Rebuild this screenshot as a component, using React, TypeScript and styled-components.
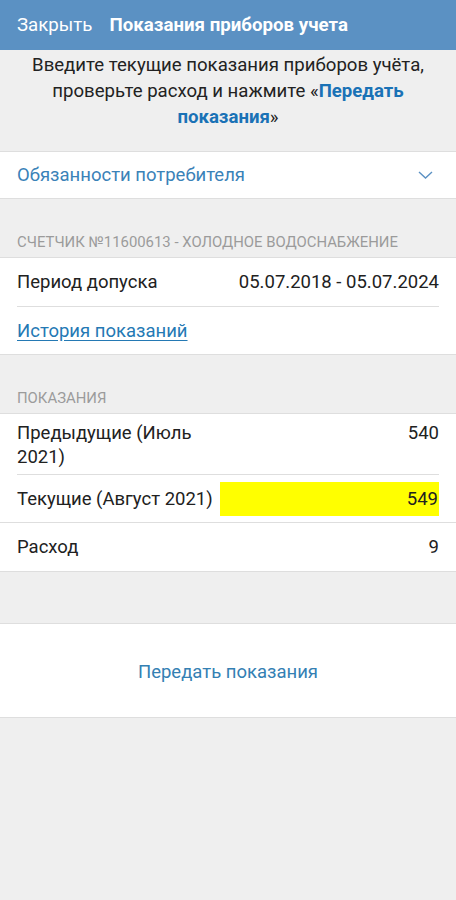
import React from 'react';
import styled, { createGlobalStyle } from 'styled-components';

const GlobalStyle = createGlobalStyle`
  html, body {
    margin: 0;
    padding: 0;
    background: #efefef;
  }
  body {
    font-family: Roboto, "Noto Sans", Arial, sans-serif;
    color: #212121;
  }
`;

const Page = styled.div`
  width: 456px;
  min-height: 900px;
  background: #efefef;
`;

const Header = styled.div`
  height: 50px;
  background: #5b91c3;
  display: flex;
  align-items: center;
  padding: 0 17px;
  gap: 17px;
  color: #fff;
  font-size: 18.7px;
`;

const CloseButton = styled.span`
  font-weight: 400;
`;

const Title = styled.span`
  font-weight: 700;
`;

const Intro = styled.div`
  padding: 2px 16px 21px;
  text-align: center;
  font-size: 18.6px;
  line-height: 26px;
  color: #222;
  border-bottom: 1px solid #dedede;
`;

const IntroLink = styled.b`
  color: #1a72b6;
  line-height: 26px;
`;

const Collapse = styled.div`
  height: 46px;
  background: #fff;
  display: flex;
  align-items: center;
  justify-content: space-between;
  padding: 0 23px 0 17px;
  border-bottom: 1px solid #dedede;
  color: #3a82b8;
  font-size: 18.5px;
`;

const SectionTitle = styled.div`
  padding: 36px 17px 8px;
  font-size: 14.9px;
  line-height: 14px;
  color: #9b9b9b;
  text-transform: uppercase;
  border-bottom: 1px solid #dedede;
`;

const Card = styled.div`
  background: #fff;
  padding-left: 17px;
  border-bottom: 1px solid #dedede;
`;

const Row = styled.div<{ $inset?: boolean; $tall?: boolean }>`
  display: flex;
  align-items: ${p => (p.$tall ? 'flex-start' : 'center')};
  justify-content: space-between;
  min-height: ${p => (p.$tall ? '60px' : '48px')};
  padding: ${p => (p.$tall ? '7px 0 5px' : '0')};
  margin-right: 17px;
  box-sizing: border-box;
  font-size: 18.5px;
  line-height: 24px;
  border-top: ${p => (p.$inset ? '1px solid #dedede' : 'none')};
`;

const Label = styled.span<{ $narrow?: boolean }>`
  width: ${p => (p.$narrow ? '205px' : 'auto')};
`;

const Value = styled.span`
  text-align: right;
`;

const HistoryLink = styled.a`
  color: #2479b4;
  text-decoration: underline;
  text-underline-offset: 3px;
`;

const Highlight = styled.span`
  flex: 0 0 219px;
  height: 34px;
  background: #ffff00;
  display: flex;
  align-items: center;
  justify-content: flex-end;
  padding-right: 1px;
  box-sizing: border-box;
`;

const Divider = styled.div`
  height: 1px;
  background: #dedede;
  margin-left: -17px;
`;

const SendButton = styled.div`
  margin-top: 51px;
  height: 95px;
  padding-top: 2px;
  box-sizing: border-box;
  background: #fff;
  border-top: 1px solid #dedede;
  border-bottom: 1px solid #dedede;
  display: flex;
  align-items: center;
  justify-content: center;
  color: #3480b3;
  font-size: 18.5px;
`;

const Chevron = () => (
  <svg width="15" height="8" viewBox="0 0 15 8">
    <polyline points="1,1 7.5,7 14,1" fill="none" stroke="#5b91c3" strokeWidth="1.4" />
  </svg>
);

export default function App() {
  return (
    <Page>
      <GlobalStyle />
      <Header>
        <CloseButton>Закрыть</CloseButton>
        <Title>Показания приборов учета</Title>
      </Header>
      <Intro>
        Введите текущие показания приборов учёта, проверьте расход и нажмите «<IntroLink>Передать показания</IntroLink>»
      </Intro>
      <Collapse>
        <span>Обязанности потребителя</span>
        <Chevron />
      </Collapse>

      <SectionTitle>Счетчик №11600613 - Холодное водоснабжение</SectionTitle>
      <Card>
        <Row>
          <Label>Период допуска</Label>
          <Value>05.07.2018 - 05.07.2024</Value>
        </Row>
        <Row $inset>
          <HistoryLink>История показаний</HistoryLink>
        </Row>
      </Card>

      <SectionTitle>Показания</SectionTitle>
      <Card>
        <Row $tall>
          <Label $narrow>Предыдущие (Июль 2021)</Label>
          <Value>540</Value>
        </Row>
        <Row $inset>
          <Label>Текущие (Август 2021)</Label>
          <Highlight>549</Highlight>
        </Row>
        <Divider />
        <Row>
          <Label>Расход</Label>
          <Value>9</Value>
        </Row>
      </Card>

      <SendButton>Передать показания</SendButton>
    </Page>
  );
}
